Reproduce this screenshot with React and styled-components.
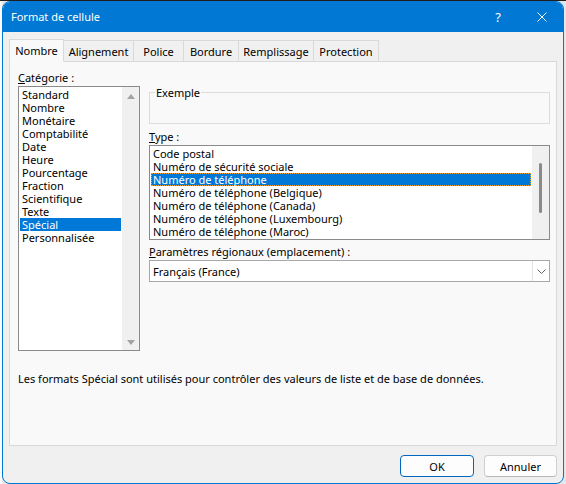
import React from "react";
import styled, { createGlobalStyle } from "styled-components";

const FONT = `"Segoe UI", "Noto Sans", "Liberation Sans", sans-serif`;

const Global = createGlobalStyle`
  html, body { margin: 0; padding: 0; }
  body { background: #f0f0f0; font-family: ${FONT}; font-size: 11px; color: #000; }
  * { box-sizing: border-box; }
`;

const Desktop = styled.div`
  width: 566px;
  height: 484px;
  overflow: hidden;
  padding: 1px 2px 0 2px;
  background:
    linear-gradient(to bottom, #1f1f1f 0 1px, transparent 1px),
    linear-gradient(to right, #fbfbfb 0 2px, #e6e6e6 2px);
`;

const Window = styled.div`
  width: 562px;
  height: 483px;
  border: 1px solid #0078d4;
  border-radius: 8px;
  overflow: hidden;
  display: flex;
  flex-direction: column;
  background: #f0f0f0;
`;

const TitleBar = styled.div`
  height: 30px;
  flex: none;
  background: #0078d4;
  color: #fff;
  display: flex;
  align-items: center;
  padding-left: 8px;
`;

const Title = styled.div`
  flex: 1;
  font-size: 11px;
  line-height: 16px;
`;

const CaptionButton = styled.div`
  width: ${(p) => p.$w}px;
  height: 30px;
  display: flex;
  align-items: center;
  justify-content: center;
  color: #fff;
  font-size: 13px;
`;

const Client = styled.div`
  flex: 1;
  display: flex;
  flex-direction: column;
  padding: 7px 6px 6px 6px;
`;

const TabRow = styled.div`
  display: flex;
  align-items: flex-end;
  height: 23px;
  margin-bottom: -1px;
  position: relative;
  z-index: 1;
`;

const Tab = styled.div`
  width: ${(p) => p.$w}px;
  height: ${(p) => (p.$active ? 23 : 22)}px;
  margin-left: ${(p) => (p.$first ? 0 : -1)}px;
  border: 1px solid #d9d9d9;
  border-bottom-color: ${(p) => (p.$active ? "#f9f9f9" : "#d9d9d9")};
  background: ${(p) => (p.$active ? "#f9f9f9" : "#f0f0f0")};
  display: flex;
  align-items: center;
  justify-content: center;
  padding-bottom: ${(p) => (p.$active ? 1 : 0)}px;
  line-height: 15px;
  white-space: nowrap;
  position: relative;
  z-index: ${(p) => (p.$active ? 2 : 1)};
`;

const Panel = styled.div`
  height: 385px;
  flex: none;
  border: 1px solid #d9d9d9;
  background: #f9f9f9;
  padding: 8px 6px 0 8px;
`;

const Columns = styled.div`
  display: flex;
  gap: 9px;
  align-items: flex-start;
`;

const Column = styled.div`
  width: ${(p) => p.$w}px;
  display: flex;
  flex-direction: column;
`;

const Label = styled.div`
  line-height: 15px;
  height: 15px;
  margin-top: ${(p) => p.$mt || 0}px;
  margin-bottom: 1px;
  white-space: nowrap;
`;

const ListBox = styled.div`
  height: ${(p) => p.$h}px;
  border: 1px solid #8a8a8a;
  background: #fff;
  display: flex;
  padding-left: 1px;
`;

const Items = styled.div`
  flex: 1;
  min-width: 0;
  padding: 1px 1px 0 0;
  display: flex;
  flex-direction: column;
`;

const Item = styled.div`
  height: 13px;
  line-height: 13px;
  padding: 0 2px;
  white-space: nowrap;
  background: ${(p) => (p.$selected ? "#0078d7" : "transparent")};
  color: ${(p) => (p.$selected ? "#fff" : "#000")};
  ${(p) =>
    p.$focus
      ? `border: 1px dotted #f3a530; padding: 0 1px; line-height: 11px;`
      : ""}
`;

const ScrollBar = styled.div`
  width: 17px;
  flex: none;
  background: #f0f0f0;
  display: flex;
  flex-direction: column;
  align-items: center;
  justify-content: ${(p) => (p.$arrows ? "space-between" : "flex-start")};
  padding-top: ${(p) => (p.$arrows ? 0 : 17)}px;
`;

const ArrowBox = styled.div`
  height: 17px;
  width: 17px;
  display: flex;
  align-items: center;
  justify-content: center;
`;

const Triangle = styled.div`
  width: 0;
  height: 0;
  border-left: 4.5px solid transparent;
  border-right: 4.5px solid transparent;
  ${(p) =>
    p.$down
      ? `border-top: 5px solid #a3a3a3; margin-top: 1px;`
      : `border-bottom: 5px solid #a3a3a3; margin-top: 1px;`}
`;

const Thumb = styled.div`
  width: 3px;
  height: 50px;
  border-radius: 2px;
  background: #8a8a8a;
`;

const GroupBox = styled.div`
  position: relative;
  margin-top: 22px;
  height: 32px;
  border: 1px solid #dcdcdc;
`;

const GroupTitle = styled.div`
  position: absolute;
  top: -8px;
  left: 5px;
  padding: 0 1px;
  line-height: 15px;
  background: #f9f9f9;
`;

const Select = styled.div`
  height: 22px;
  border: 1px solid #a8a8a8;
  background: #fff;
  display: flex;
  align-items: center;
`;

const SelectValue = styled.div`
  flex: 1;
  padding-left: 3px;
  line-height: 15px;
`;

const SelectArrow = styled.div`
  width: 17px;
  align-self: stretch;
  border-left: 1px solid #e3e3e3;
  display: flex;
  align-items: center;
  justify-content: center;
`;

const Description = styled.div`
  margin-top: 20px;
  line-height: 15px;
  white-space: nowrap;
`;

const ButtonRow = styled.div`
  display: flex;
  justify-content: flex-end;
  gap: 10px;
  margin-top: 9px;
`;

const Button = styled.div`
  width: ${(p) => p.$w}px;
  height: 22px;
  border: 1px solid ${(p) => (p.$default ? "#0067c0" : "#d0d0d0")};
  border-bottom-color: ${(p) => (p.$default ? "#0067c0" : "#b8b8b8")};
  border-radius: 4px;
  background: #fdfdfd;
  display: flex;
  align-items: center;
  justify-content: center;
  line-height: 15px;
`;

const categories = [
  "Standard",
  "Nombre",
  "Monétaire",
  "Comptabilité",
  "Date",
  "Heure",
  "Pourcentage",
  "Fraction",
  "Scientifique",
  "Texte",
  "Spécial",
  "Personnalisée",
];

const types = [
  "Code postal",
  "Numéro de sécurité sociale",
  "Numéro de téléphone",
  "Numéro de téléphone (Belgique)",
  "Numéro de téléphone (Canada)",
  "Numéro de téléphone (Luxembourg)",
  "Numéro de téléphone (Maroc)",
];

const tabs = [
  ["Nombre", 55],
  ["Alignement", 71],
  ["Police", 51],
  ["Bordure", 56],
  ["Remplissage", 76],
  ["Protection", 66],
];

export default function App() {
  return (
    <>
      <Global />
      <Desktop>
        <Window>
          <TitleBar>
            <Title>Format de cellule</Title>
            <CaptionButton $w={46}>?</CaptionButton>
            <CaptionButton $w={42}>
              <svg width="10" height="10" viewBox="0 0 10 10">
                <path d="M0.5 0.5L9.5 9.5M9.5 0.5L0.5 9.5" stroke="#fff" strokeWidth="1" fill="none" />
              </svg>
            </CaptionButton>
          </TitleBar>
          <Client>
            <TabRow>
              {tabs.map(([t, w], i) => (
                <Tab key={t} $w={w} $first={i === 0} $active={i === 0}>
                  {t}
                </Tab>
              ))}
            </TabRow>
            <Panel>
              <Columns>
                <Column $w={122}>
                  <Label>
                    <u>C</u>atégorie :
                  </Label>
                  <ListBox $h={265}>
                    <Items>
                      {categories.map((c) => (
                        <Item key={c} $selected={c === "Spécial"}>
                          {c}
                        </Item>
                      ))}
                    </Items>
                    <ScrollBar $arrows>
                      <ArrowBox>
                        <Triangle />
                      </ArrowBox>
                      <ArrowBox>
                        <Triangle $down />
                      </ArrowBox>
                    </ScrollBar>
                  </ListBox>
                </Column>
                <Column $w={401}>
                  <GroupBox>
                    <GroupTitle>Exemple</GroupTitle>
                  </GroupBox>
                  <Label $mt={5}>
                    <u>T</u>ype :
                  </Label>
                  <ListBox $h={95}>
                    <Items>
                      {types.map((t) => (
                        <Item
                          key={t}
                          $selected={t === "Numéro de téléphone"}
                          $focus={t === "Numéro de téléphone"}
                        >
                          {t}
                        </Item>
                      ))}
                    </Items>
                    <ScrollBar>
                      <Thumb />
                    </ScrollBar>
                  </ListBox>
                  <Label $mt={4}>
                    <u>P</u>aramètres régionaux (emplacement) :
                  </Label>
                  <Select>
                    <SelectValue>Français (France)</SelectValue>
                    <SelectArrow>
                      <svg width="9" height="5" viewBox="0 0 9 5">
                        <path d="M0.5 0.5L4.5 4.5L8.5 0.5" stroke="#606060" strokeWidth="1" fill="none" />
                      </svg>
                    </SelectArrow>
                  </Select>
                </Column>
              </Columns>
              <Description>
                Les formats Spécial sont utilisés pour contrôler des valeurs de liste et de base de données.
              </Description>
            </Panel>
            <ButtonRow>
              <Button $w={74} $default>
                OK
              </Button>
              <Button $w={73}>Annuler</Button>
            </ButtonRow>
          </Client>
        </Window>
      </Desktop>
    </>
  );
}
